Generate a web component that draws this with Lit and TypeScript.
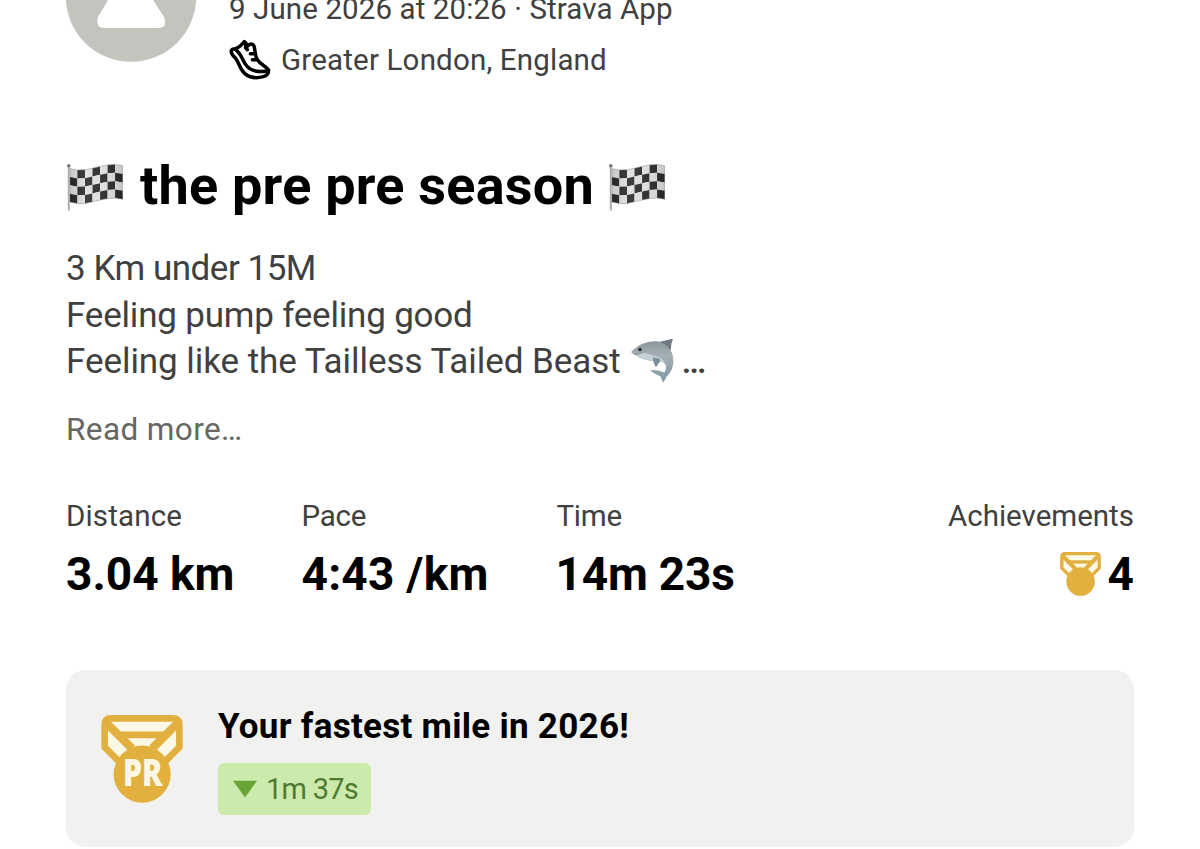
import { LitElement, html, svg, css } from "lit";
import { customElement, property } from "lit/decorators.js";

@customElement("checkered-flag")
class CheckeredFlag extends LitElement {
  static styles = css`
    :host { display: block; width: 57px; height: 48px; }
    svg { display: block; }
  `;
  render() {
    const xs = [3, 10.6, 18.2, 25.7, 33.3, 40.8, 48.3, 56];
    const tops = [4.5, 6, 5.8, 4.2, 2.4, 0.9, 0.4, 1.6];
    const cells = [];
    for (let c = 0; c < 7; c++) {
      for (let r = 0; r < 4; r++) {
        const a = tops[c] + r * 8.4;
        const b = tops[c + 1] + r * 8.4;
        const dark = (c + r) % 2 === 1;
        cells.push(svg`<polygon points="${xs[c]},${a} ${xs[c + 1]},${b} ${xs[c + 1]},${b + 8.4} ${xs[c]},${a + 8.4}" fill=${dark ? "#29292b" : "#dedee0"}></polygon>`);
      }
    }
    return html`<svg width="57" height="48" viewBox="-0.8 0 57 48">
      <defs>
        <linearGradient id="shade" x1="0" x2="1" y1="0" y2="0">
          <stop offset="0" stop-color="#000" stop-opacity=".1"></stop>
          <stop offset=".3" stop-color="#fff" stop-opacity=".1"></stop>
          <stop offset=".6" stop-color="#fff" stop-opacity=".06"></stop>
          <stop offset="1" stop-color="#000" stop-opacity=".12"></stop>
        </linearGradient>
      </defs>
      ${cells}
      <path d="M3 4.5L10.6 6L18.2 5.8L25.7 4.2L33.3 2.4L40.8 .9L48.3 .4L56 1.6V35.2L48.3 34L40.8 34.5L33.3 36L25.7 37.8L18.2 39.4L10.6 39.6L3 38.1Z" fill="url(#shade)" stroke="#8c8c90" stroke-width=".5"></path>
      <rect x="1" y="2" width="2" height="44.5" fill="#adadb1"></rect>
      <circle cx="2" cy="1.8" r="1.8" fill="#777"></circle>
    </svg>`;
  }
}

@customElement("medal-icon")
class MedalIcon extends LitElement {
  @property() label = "";
  static styles = css`
    :host { display: block; }
    svg { display: block; width: 100%; height: 100%; }
    text { font-family: "Open Sans", "Noto Sans", sans-serif; font-weight: 800; font-size: 113px; }
  `;
  render() {
    return html`<svg viewBox="138 165 245 265">
      <path d="M147 188Q147 174 161 174H360Q374 174 374 188V258L326 308H195L147 258Z" fill="#fcf8e6"></path>
      <g fill="none" stroke="#e2b03e" stroke-width="20">
        <path d="M190 304L148 262V195Q148 175 168 175H353Q373 175 373 195V262L331 304"></path>
        <path d="M182 225H339"></path>
        <path d="M152 188L230 266M369 188L291 266" stroke-width="25"></path>
      </g>
      <circle cx="261" cy="343" r="86" fill="#e2b03e"></circle>
      ${this.label ? svg`<text x="203" y="380" textLength="119" lengthAdjust="spacingAndGlyphs" fill="#fcf7e4">${this.label}</text>` : ""}
    </svg>`;
  }
}

@customElement("app-root")
class AppRoot extends LitElement {
  static styles = css`
    :host {
      display: block;
      height: 849px;
      overflow: hidden;
      background: #fff;
      color: #40403f;
      font-family: Roboto, "Liberation Sans", sans-serif;
      white-space: nowrap;
    }
    * { box-sizing: border-box; }
    .page { padding: 0 66px; }
    .header { display: flex; gap: 33px; height: 80px; }
    .avatar { display: block; width: 130px; height: 62px; flex: none; }
    .meta { margin-top: -9px; font-size: 29.5px; line-height: 36px; }
    .date { letter-spacing: 0.1px; }
    .loc { letter-spacing: 0.18px; }
    .place { display: flex; align-items: center; margin-top: 12.5px; }
    .shoe { display: block; width: 42px; height: 41px; margin: -1px 10px 0 0; }
    .title { display: flex; align-items: flex-start; margin: 74px 0 0; height: 65px; color: #000; font-size: 54px; line-height: 64px; font-weight: 700; }
    .title checkered-flag { margin-top: 10px; }
    .name { margin: 0 14px 0 17px; letter-spacing: 0.23px; }
    .desc { margin-top: 27px; font-size: 35px; line-height: 46.7px; }
    .line { display: flex; height: 46.7px; }
    .l1 { letter-spacing: -0.48px; }
    .l2 { letter-spacing: -0.2px; }
    .l3 { letter-spacing: -0.06px; }
    .shark { display: block; width: 45px; height: 47px; margin: -2px 7px 0 9px; }
    .dots { font-weight: 500; }
    .more { margin-top: 24px; font-size: 31.5px; line-height: 40px; color: #666663; letter-spacing: 0.4px; }
    .stats { display: grid; grid-template-columns: 235.5px 255px 1fr auto; margin-top: 48px; }
    .label { font-size: 29.5px; line-height: 36px; }
    .spread { letter-spacing: 0.15px; }
    .tight { letter-spacing: -0.25px; }
    .value { display: flex; justify-content: flex-start; align-items: center; margin-top: 12px; font-size: 46px; line-height: 56px; font-weight: 700; color: #000; }
    .v2 { letter-spacing: 0.25px; }
    .v3 { letter-spacing: -0.2px; margin-left: -1px; }
    .end { justify-content: flex-end; }
    .small { width: 41px; height: 44px; margin-right: 7px; }
    .card { display: flex; margin-top: 68px; height: 177px; border-radius: 20px; background: #f1f1ef; padding: 35px; }
    .big { width: 82px; height: 88px; margin: 10px 35px 0 0; }
    .headline { font-size: 35px; line-height: 42px; margin-top: 1px; font-weight: 700; color: #000; letter-spacing: 0.28px; }
    .badge { display: flex; align-items: center; width: 153px; height: 52px; margin-top: 15px; padding-left: 14px; border-radius: 6px; background: #cceaac; color: #507a31; font-size: 29px; letter-spacing: -0.75px; }
    .badge svg { display: block; margin-right: 8px; }
  `;
  render() {
    return html`
      <div class="page">
        <header class="header">
          <svg class="avatar" viewBox="0 0 130 62">
            <circle cx="65" cy="-3.5" r="65.3" fill="#c4c3bd"></circle>
            <path d="M45 -5L32 17Q29 28 38 28H92Q102 28 98 17L84 -5Z" fill="#fff"></path>
          </svg>
          <div class="meta">
            <div><span class="date">9 June 2026 at 20:26 · Strava App</span></div>
            <div class="place">
              <svg class="shoe" viewBox="536 120 126 123">
                <g fill="none" stroke="#000" stroke-width="10.5" stroke-linejoin="round" stroke-linecap="round">
                  <path d="M543 154Q545 150 555 149Q567 146 582 128L587 132L586 146L598 136Q607 133 611 141C615 154 613 169 621 182C630 197 644 199 655 213Q655 229 639 233C620 238 599 236 585 225C567 210 566 188 555 177Q541 166 543 154Z"></path>
                  <path d="M556 152C571 163 575 179 584 194C598 216 620 222 654 215"></path>
                  <path d="M600 164H612M606 182H619M586 146L591 152"></path>
                </g>
              </svg>
              <span class="loc">Greater London, England</span>
            </div>
          </div>
        </header>
        <h1 class="title"><checkered-flag></checkered-flag><span class="name">the pre pre season</span><checkered-flag></checkered-flag></h1>
        <div class="desc">
          <div class="line l1">3 Km under 15M</div>
          <div class="line l2">Feeling pump feeling good</div>
          <div class="line l3">Feeling like the Tailless Tailed Beast
            <svg class="shark" viewBox="450 22 135 140">
              <defs>
                <linearGradient id="body" x1="0" y1="0" x2="0" y2="1">
                  <stop offset="0" stop-color="#8d979e"></stop>
                  <stop offset=".35" stop-color="#a5b0b6"></stop>
                  <stop offset="1" stop-color="#7f95a2"></stop>
                </linearGradient>
              </defs>
              <path d="M534 37Q550 34 579 27Q572 43 572 62Z" fill="#717783"></path>
              <path d="M454 66C470 46 505 31 535 35C565 42 583 69 580 99C578 119 570 130 560 140Q555 151 549 158Q545 145 541 139Q524 133 510 121Q533 118 553 128C563 113 558 99 543 95C520 95 488 91 467 76Q454 72 454 66Z" fill="url(#body)"></path>
              <path d="M461 72Q478 76 490 69C514 75 541 79 556 98C544 98 517 93 496 90Q475 85 461 72Z" fill="#c3d1d7"></path>
              <path d="M518 84Q539 83 541 92Q535 103 528 112Q521 104 518 84Z" fill="#7890a0"></path>
              <path d="M462 73Q479 76 487 67" fill="none" stroke="#697982" stroke-width="2"></path>
              <circle cx="480" cy="59" r="5" fill="#202428"></circle>
            </svg><span class="dots">…</span></div>
        </div>
        <div class="more"><span>Read more…</span></div>
        <section class="stats">
          <div><div class="label spread">Distance</div><div class="value v1">3.04 km</div></div>
          <div><div class="label tight">Pace</div><div class="value v2">4:43 /km</div></div>
          <div><div class="label tight">Time</div><div class="value v3">14m 23s</div></div>
          <div><div class="label">Achievements</div><div class="value end"><medal-icon class="small"></medal-icon>4</div></div>
        </section>
        <section class="card">
          <medal-icon class="big" label="PR"></medal-icon>
          <div>
            <div class="headline">Your fastest mile in 2026!</div>
            <div class="badge"><svg width="26" height="18" viewBox="0 0 26 18"><path d="M1 .8H25L13 17.5Z" fill="#69a436"></path></svg><span>1m 37s</span></div>
          </div>
        </section>
      </div>
    `;
  }
}
